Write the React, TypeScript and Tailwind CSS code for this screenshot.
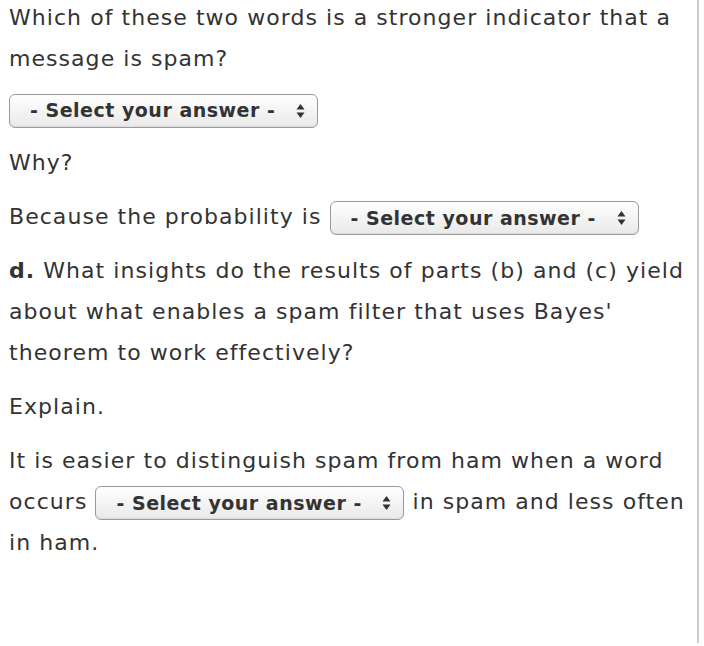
import React from "react";

function Sel() {
  return (
    <span className="inline-flex items-center justify-between align-middle w-[309px] h-[34px] rounded-[6px] border border-[#9a9a9a] bg-gradient-to-b from-white to-[#e9e9e9] shadow-[inset_0_-1px_1px_rgba(0,0,0,0.06)] pl-[20px] pr-[12px] text-[19px] tracking-[0.5px] font-bold text-[#333] leading-none">
      <span>- Select your answer -</span>
      <svg width="9" height="16" viewBox="0 0 9 16" className="shrink-0">
        <path d="M4.5 1 L8.5 6.5 L0.5 6.5 Z" fill="#333" />
        <path d="M4.5 15 L8.5 9.5 L0.5 9.5 Z" fill="#333" />
      </svg>
    </span>
  );
}

export default function App() {
  return (
    <div className="bg-white w-[704px] h-[646px] overflow-hidden">
      <div
        className="w-[699px] h-[646px] border-r-2 border-[#cccccc] pl-[9px] pr-[8px] text-[22px] tracking-[1.05px] leading-[41px] text-[#333]"
        style={{ fontFamily: '"DejaVu Sans", Verdana, sans-serif' }}
      >
        <p className="mt-[-3px] mb-[11px]">
          Which of these two words is a stronger indicator that a message is spam?
        </p>
        <div className="h-[41px] flex items-center mb-[11px]">
          <Sel />
        </div>
        <p className="mb-[13px]">Why?</p>
        <p className="mb-[13px]">
          Because the probability is <Sel />
        </p>
        <p className="mb-[13px]">
          <b>d.</b> What insights do the results of parts (b) and (c) yield about what enables a spam filter that uses Bayes' theorem to work effectively?
        </p>
        <p className="mb-[13px]">Explain.</p>
        <p className="mb-[13px]">
          It is easier to distinguish spam from ham when a word occurs <Sel /> in spam and less often in ham.
        </p>
      </div>
    </div>
  );
}
